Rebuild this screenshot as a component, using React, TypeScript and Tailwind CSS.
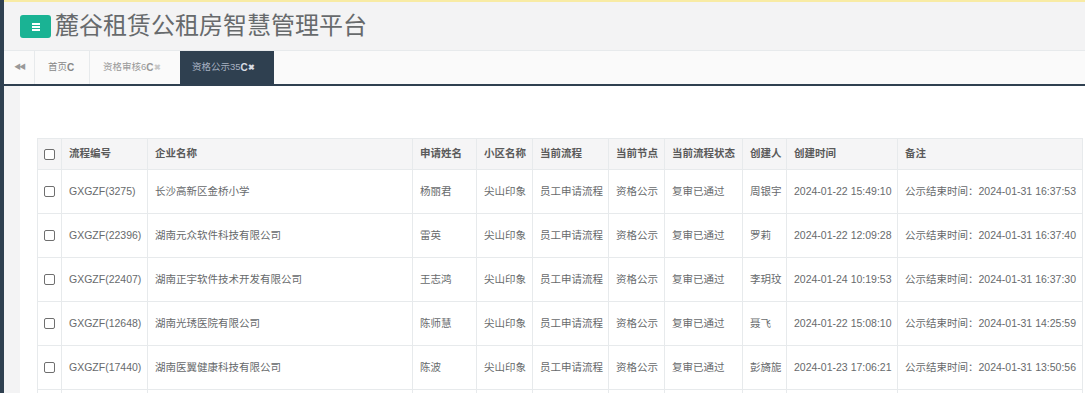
import React from 'react';

const font = "font-['Liberation_Sans','Noto_Sans_CJK_SC',sans-serif]";

interface Row {
  no: string;
  company: string;
  name: string;
  community: string;
  flow: string;
  node: string;
  status: string;
  creator: string;
  created: string;
  remark: string;
}

const rows: Row[] = [
  { no: 'GXGZF(3275)', company: '长沙高新区金桥小学', name: '杨丽君', community: '尖山印象', flow: '员工申请流程', node: '资格公示', status: '复审已通过', creator: '周银宇', created: '2024-01-22 15:49:10', remark: '公示结束时间：2024-01-31 16:37:53' },
  { no: 'GXGZF(22396)', company: '湖南元众软件科技有限公司', name: '雷英', community: '尖山印象', flow: '员工申请流程', node: '资格公示', status: '复审已通过', creator: '罗莉', created: '2024-01-22 12:09:28', remark: '公示结束时间：2024-01-31 16:37:40' },
  { no: 'GXGZF(22407)', company: '湖南正宇软件技术开发有限公司', name: '王志鸿', community: '尖山印象', flow: '员工申请流程', node: '资格公示', status: '复审已通过', creator: '李玥玟', created: '2024-01-24 10:19:53', remark: '公示结束时间：2024-01-31 16:37:30' },
  { no: 'GXGZF(12648)', company: '湖南光琇医院有限公司', name: '陈师慧', community: '尖山印象', flow: '员工申请流程', node: '资格公示', status: '复审已通过', creator: '聂飞', created: '2024-01-22 15:08:10', remark: '公示结束时间：2024-01-31 14:25:59' },
  { no: 'GXGZF(17440)', company: '湖南医翼健康科技有限公司', name: '陈波', community: '尖山印象', flow: '员工申请流程', node: '资格公示', status: '复审已通过', creator: '彭旖旎', created: '2024-01-23 17:06:21', remark: '公示结束时间：2024-01-31 13:50:56' },
];

const headers = ['流程编号', '企业名称', '申请姓名', '小区名称', '当前流程', '当前节点', '当前流程状态', '创建人', '创建时间', '备注'];
const widths = ['w-[86px]', 'w-[265px]', 'w-[64px]', 'w-[56px]', 'w-[76px]', 'w-[56px]', 'w-[78px]', 'w-[44px]', 'w-[111px]', 'w-[185px]'];

const Checkbox = () => (
  <span className="inline-block w-[11px] h-[11px] border border-[#6f6f6f] rounded-[2px] bg-white align-middle" />
);

const App: React.FC = () => {
  return (
    <div className={`${font} w-[1085px] h-[393px] overflow-hidden flex bg-white`}>
      {/* sidebar edge */}
      <div className="w-[4px] shrink-0 bg-[#2f4050]" />

      <div className="flex-1 flex flex-col min-w-0">
        {/* header */}
        <div className="h-[51px] shrink-0 bg-[#f3f3f4] border-t-2 border-[#f8eba4] border-b border-b-[#e7eaec] flex items-center pl-[16px]">
          <button className="w-[31px] h-[23px] mt-[1px] bg-[#1ab394] rounded-[3px] flex items-center justify-center">
            <span className="flex flex-col gap-[1px]">
              <span className="block w-[8px] h-[2px] bg-white" />
              <span className="block w-[8px] h-[2px] bg-white" />
              <span className="block w-[8px] h-[2px] bg-white" />
            </span>
          </button>
          <span className="ml-[4px] text-[24px] leading-none text-[#676a6c]">麓谷租赁公租房智慧管理平台</span>
        </div>

        {/* tabs */}
        <div className="h-[35px] shrink-0 bg-[#fafafa] border-b-2 border-[#2f4050] flex text-[9.5px]">
          <div className="w-[31px] border-r border-[#e7eaec] flex items-center justify-center text-[#999] text-[7px] tracking-[-2px]">◀◀</div>
          <div className="w-[55px] border-r border-[#e7eaec] flex items-center pl-[13px] text-[#888]">
            首页<span className="font-bold text-[10px] text-[#888]">C</span>
          </div>
          <div className="w-[90px] flex items-center pl-[13px] text-[#999]">
            资格审核6<span className="font-bold text-[10px] text-[#999]">C</span><span className="text-[#c8c8c8] text-[8px] font-bold">✖</span>
          </div>
          <div className="w-[94px] bg-[#2f4050] flex items-center pl-[12px] text-[#a7b1c2]">
            资格公示35<span className="font-bold text-[10px] text-[#d8dde5]">C</span><span className="text-[#d8dde5] text-[8px] font-bold">✖</span>
          </div>
        </div>

        {/* body */}
        <div className="flex flex-1 min-h-0">
          <div className="w-[16px] shrink-0 bg-[#f3f3f4]" />
          <div className="flex-1 pt-[52px] pl-[17px]">
            <table className="table-fixed border-collapse w-[1045px] text-[10.5px] text-[#676a6c]">
              <colgroup>
                <col className="w-[24px]" />
                {widths.map((w, i) => (
                  <col key={i} className={w} />
                ))}
              </colgroup>
              <thead>
                <tr className="h-[31px] bg-[#f5f5f6]">
                  <th className="border border-[#e7eaec] text-center align-middle">
                    <Checkbox />
                  </th>
                  {headers.map((h) => (
                    <th key={h} className="border border-[#e7eaec] px-[7px] text-left font-bold text-[#5a5a5a] whitespace-nowrap">
                      {h}
                    </th>
                  ))}
                </tr>
              </thead>
              <tbody>
                {rows.map((r, i) => (
                  <tr key={i} className="h-[44px]">
                    <td className="border border-[#e7eaec] text-center align-middle">
                      <Checkbox />
                    </td>
                    {[r.no, r.company, r.name, r.community, r.flow, r.node, r.status, r.creator, r.created, r.remark].map((v, j) => (
                      <td key={j} className="border border-[#e7eaec] px-[7px] whitespace-nowrap overflow-hidden">
                        {v}
                      </td>
                    ))}
                  </tr>
                ))}
                <tr className="h-[44px]">
                  <td className="border border-[#e7eaec]" />
                  {headers.map((h) => (
                    <td key={h} className="border border-[#e7eaec]" />
                  ))}
                </tr>
              </tbody>
            </table>
          </div>
        </div>
      </div>
    </div>
  );
};

export default App;
